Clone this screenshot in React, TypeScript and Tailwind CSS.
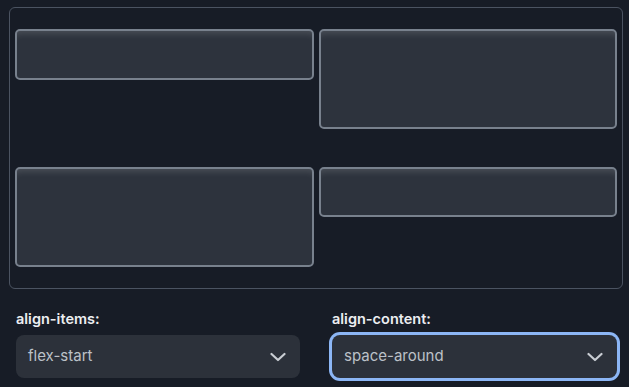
const items = [
    { id: 1, h: "h-[51px]" },
    { id: 2, h: "h-[100px]" },
    { id: 3, h: "h-[100px]" },
    { id: 4, h: "h-[50px]" },
];

const Chevron = () => (
    <svg width="16" height="10" viewBox="0 0 16 10" fill="none" className="text-[#c9cdd3]">
        <polyline points="1.5,2 8,8 14.5,2" stroke="currentColor" strokeWidth="2.2" strokeLinecap="round" strokeLinejoin="round" />
    </svg>
);

const Select = ({ value, focused }: { value: string; focused?: boolean }) => {
    return (
        <div
            className={
                focused
                    ? "flex h-[43px] items-center justify-between rounded-[8px] bg-[#2c313a] pl-3 pr-[14px] ring-[3px] ring-[#8cb6f5]"
                    : "flex h-[43px] items-center justify-between rounded-[8px] bg-[#2c313a] pl-3 pr-[14px]"
            }
        >
            <span className="text-[15px] text-[#bcc1c8]">{value}</span>
            <Chevron />
        </div>
    );
};

const App = () => {
    return (
        <div className="h-[387px] w-[629px] overflow-hidden bg-[#171c26] pt-[7px]" style={{ fontFamily: "Inter, 'Noto Sans', sans-serif" }}>
            <div className="ml-[9px] flex h-[282px] w-[614px] flex-wrap content-around items-start gap-x-[5px] rounded-[6px] border border-[#4b5361] px-[5px] py-[2px]">
                {items.map((it) => (
                    <div
                        key={it.id}
                        className={`${it.h} w-[calc(50%-2.5px)] rounded-[5px] border-2 border-[#78818d] bg-[#2d333d] shadow-[inset_0_8px_6px_-5px_rgba(255,255,255,0.13)]`}
                    />
                ))}
            </div>

            <div className="mt-[20px] grid grid-cols-[284px_285px] gap-x-8 pl-4">
                <div className="flex flex-col gap-[6px]">
                    <label className="text-[14.5px] font-semibold leading-5 text-[#eceef1]">align-items:</label>
                    <Select value="flex-start" />
                </div>
                <div className="flex flex-col gap-[6px]">
                    <label className="text-[14.5px] font-semibold leading-5 text-[#eceef1]">align-content:</label>
                    <Select value="space-around" focused />
                </div>
            </div>
        </div>
    );
};

export default App;
